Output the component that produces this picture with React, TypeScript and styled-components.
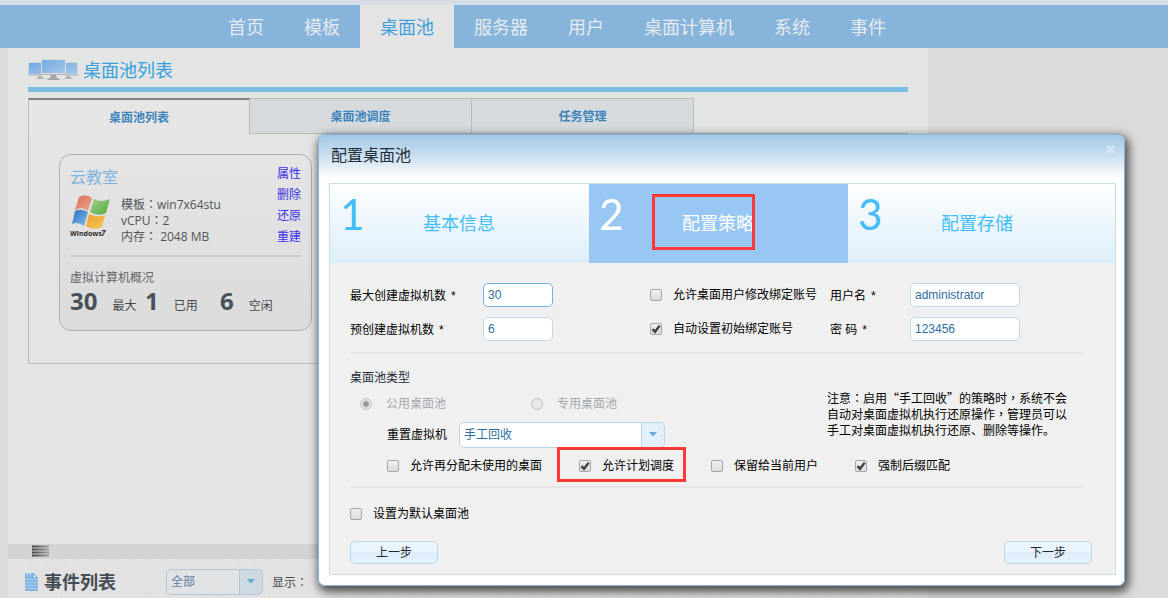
import React from "react";
import styled, { createGlobalStyle, css } from "styled-components";

const sans = `"Open Sans", "Noto Sans CJK SC", sans-serif`;
const formSans = `"Liberation Sans", "Noto Sans CJK SC", sans-serif`;

const GlobalStyle = createGlobalStyle`
  *, *::before, *::after { box-sizing: border-box; }
  html, body, #root { height: 100%; }
  body {
    margin: 0;
    overflow: hidden;
    background: #dbdbdb;
    font: 12px/16px ${sans};
    color: #44484c;
  }
  h1, h2, h3, p, ul { margin: 0; padding: 0; font-weight: 400; }
  input, select, button { font: 12px/16px ${formSans}; margin: 0; }
`;

const Page = styled.div`
  position: relative;
  display: flex;
  flex-direction: column;
  height: 100vh;
  overflow: hidden;
`;

const Nav = styled.nav`
  display: flex;
  flex: none;
  height: 48px;
  padding-left: 208px;
  border-top: 5px solid #d6dde4;
  background: #86b4da;
`;

const NavLink = styled.a<{ $active?: boolean }>`
  display: flex;
  align-items: center;
  padding: 0 20px;
  font-size: 18px;
  line-height: 24px;
  white-space: nowrap;
  text-decoration: none;
  color: ${(p) => (p.$active ? "#3f9fd8" : "#e6eaee")};
  background: ${(p) => (p.$active ? "#e4e4e4" : "transparent")};
`;

const Main = styled.main`
  display: flex;
  flex-direction: column;
  flex: 1;
  width: calc(100% - 248px);
  margin-left: 8px;
  background: #e3e4e4;
`;

const Pool = styled.section`
  flex: 1;
  padding: 8px 20px 0;
`;

const PageTitle = styled.h1`
  display: flex;
  align-items: center;
  gap: 4px;
  height: 36px;
  padding-bottom: 3px;
  border-bottom: 5px solid #7bbce0;
  font-size: 18px;
  line-height: 24px;
  color: #35a0dc;
`;

const Tabs = styled.div`
  display: flex;
  height: 36px;
  margin-top: 6px;
  border-bottom: 1px solid #babdbf;
`;

const Tab = styled.button<{ $active?: boolean }>`
  width: 222px;
  padding: 2px 0 0;
  border: 1px solid #babdbf;
  border-width: 1px 1px 0 0;
  font: bold 12px/16px ${sans};
  color: #3a83bb;
  background: #d6dadd;
  ${(p) =>
    p.$active &&
    css`
      height: 36px;
      border-left-width: 1px;
      border-top: 2px solid #808080;
      background: #e5e5e5;
    `}
`;

const TabPanel = styled.div`
  height: 230px;
  padding: 20px 30px;
  border: 1px solid #babdbf;
  border-top: 0;
`;

const Card = styled.article`
  width: 253px;
  height: 177px;
  padding: 9px 10px 0 10px;
  border: 1px solid #b0b0b0;
  border-radius: 12px;
  background: linear-gradient(#e5e5e5, #dbdbdb);
`;

const CardTop = styled.div`
  display: flex;
  justify-content: space-between;
  height: 93px;
  border-bottom: 2px solid #cbd0d3;
`;

const CardName = styled.h2`
  margin: 2px 0 6px;
  font-size: 16px;
  line-height: 22px;
  color: #7fb3dc;
`;

const Specs = styled.div`
  display: flex;
  gap: 9px;
  color: #505458;
`;

const SpecText = styled.p`
  padding-top: 3px;
  white-space: pre-line;
`;

const Actions = styled.div`
  display: flex;
  flex-direction: column;
  gap: 5px;
  padding-top: 2px;
`;

const ActionLink = styled.a`
  color: #3a30e8;
  text-decoration: none;
`;

const Caption = styled.h3`
  margin-top: 12px;
  font-size: 12px;
  line-height: 18px;
  color: #606468;
`;

const Counts = styled.div`
  display: flex;
  align-items: baseline;
`;

const Count = styled.p`
  display: flex;
  align-items: baseline;
  gap: 15px;
  width: 75px;
  white-space: nowrap;
`;

const Big = styled.strong`
  font-size: 24px;
  line-height: 28px;
  color: #465058;
`;

const Splitter = styled.div`
  flex: none;
  height: 15px;
  padding: 1px 24px;
  background: #d3d3d3;
`;

const EventBar = styled.section`
  display: flex;
  flex: none;
  align-items: center;
  height: 39px;
  padding: 7px 16px 0;
  background: repeating-linear-gradient(45deg, #e4e4e4 0 2px, #dedede 2px 3px);
`;

const EventTitle = styled.h2`
  margin: 0 50px 0 4px;
  font-size: 18px;
  line-height: 24px;
  font-weight: 700;
  color: #444c55;
`;

const SelectWrap = styled.span<{ $muted?: boolean }>`
  position: relative;
  display: flex;
  width: ${(p) => (p.$muted ? 97 : 206)}px;
  height: 26px;
  border: 1px solid ${(p) => (p.$muted ? "#b4c8dc" : "#b9d6ec")};
  border-radius: 5px;
  background: ${(p) =>
    p.$muted
      ? "linear-gradient(90deg, #e1e2e3 calc(100% - 23px), #b4c8dc 0, #b4c8dc calc(100% - 22px), #cfd9e3 0)"
      : "linear-gradient(90deg, #fff calc(100% - 23px), #b9d6ec 0, #b9d6ec calc(100% - 22px), #e2f0fb 0)"};
  select {
    flex: 1;
    padding: 0 4px;
    border: 0;
    outline: 0;
    appearance: none;
    background: transparent;
    color: ${(p) => (p.$muted ? "#5f7f9f" : "#2e6e9e")};
  }
  svg {
    position: absolute;
    right: 7px;
    top: 9px;
    pointer-events: none;
  }
`;

const ShowLabel = styled.span`
  margin-left: 9px;
  padding-top: 2px;
`;

/* Colons and commas sit in the middle of their square. */
const CenteredMark = styled.span`
  font-family: "Noto Sans CJK TC", sans-serif;
  line-height: 1px;
`;

const Dialog = styled.section`
  position: absolute;
  top: 134px;
  left: 318px;
  right: 43px;
  padding: 0 8px 10px 10px;
  border: 1px solid #86b3d9;
  border-radius: 7px;
  background: linear-gradient(#a3c8e5, #c0d9ee 16px, #fff 44px);
  box-shadow: 2px 4px 10px 2px rgba(0, 0, 0, 0.65);
  font-family: ${formSans};
  color: #000;
`;

const DialogHead = styled.header`
  display: flex;
  justify-content: space-between;
  height: 48px;
  padding: 10px 0 0 2px;
`;

const DialogTitle = styled.h2`
  font-size: 16px;
  line-height: 22px;
  color: #222e3a;
`;

const Close = styled.button`
  display: flex;
  width: 10px;
  height: 10px;
  padding: 0;
  border: 0;
  background: none;
`;

const DialogBody = styled.form`
  border: 1px solid #c8dfe9;
  background: #f0f0f0;
`;

const Steps = styled.div`
  display: flex;
  height: 79px;
`;

const StepNumber = styled.span`
  width: 24px;
  font: 42px/60px Lato, sans-serif;
`;

const StepLabel = styled.span`
  flex: 1;
  padding-right: 35px;
  font-size: 18px;
  line-height: 80px;
  text-align: center;
`;

const Step = styled.div<{ $active?: boolean }>`
  display: flex;
  flex: 0 0 33%;
  padding-left: 10px;
  color: ${(p) => (p.$active ? "#fff" : "#43bdf5")};
  background: ${(p) => (p.$active ? "#98c7f4" : "linear-gradient(#fdfeff, #eef6fc 50%, #dceef8)")};
  &:last-child {
    flex: 1;
    padding-right: 8px;
  }
`;

const Marked = styled.span<{ $inset: string }>`
  position: relative;
  display: inline-flex;
  line-height: 24px;
  &::after {
    content: "";
    position: absolute;
    inset: ${(p) => p.$inset};
    border: 3px solid #ff3838;
    pointer-events: none;
  }
`;

const Fields = styled.div`
  display: grid;
  grid-template-columns: 133px 167px 180px 80px 110px;
  row-gap: 10px;
  align-items: center;
  margin: 0 32px 0 20px;
  padding: 20px 0 11px;
  border-bottom: 2px solid #e6e6e6;
`;

const FieldLabel = styled.label`
  padding-top: 2px;
`;

const Required = styled.span`
  margin-left: 5px;
`;

const TextInput = styled.input<{ $focus?: boolean; $short?: boolean }>`
  width: ${(p) => (p.$short ? 70 : 110)}px;
  height: 24px;
  padding: 0 4px;
  border: 1px solid ${(p) => (p.$focus ? "#72b0e6" : "#bfd8ec")};
  border-radius: 5px;
  outline: 0;
  background: #fff;
  color: #2e6e9e;
`;

const Choice = styled.label<{ $off?: boolean; $gap?: number }>`
  display: flex;
  align-items: center;
  gap: ${(p) => p.$gap ?? 11}px;
  white-space: nowrap;
  color: ${(p) => (p.$off ? "#a3a8ad" : "inherit")};
`;

const Tick = styled.input`
  appearance: none;
  flex: none;
  width: 12px;
  height: 12px;
  border: 1px solid #a6a6a6;
  border-radius: 2px;
  background: linear-gradient(#eee, #dcdcdc);
  &:checked {
    background: url("data:image/svg+xml,%3Csvg xmlns='http://www.w3.org/2000/svg' viewBox='0 0 10 10'%3E%3Cpath d='M1.5 5.2 4 7.8 8.7 1.6' fill='none' stroke='%23404040' stroke-width='2.4'/%3E%3C/svg%3E") center / 10px 10px,
      linear-gradient(#eee, #dcdcdc);
  }
`;

const Radio = styled.input`
  appearance: none;
  flex: none;
  width: 12px;
  height: 12px;
  border: 1px solid #c4c4c4;
  border-radius: 50%;
  background: #e8e8e8;
  &:checked { background: radial-gradient(circle, #969696 2px, #e8e8e8 4px); }
`;

const TypeSection = styled.div`
  display: flex;
  flex-direction: column;
  margin: 0 32px 0 20px;
  padding: 16px 0 8px;
  border-bottom: 2px solid #e6e6e6;
`;

const TypeTop = styled.div`
  display: flex;
  justify-content: space-between;
`;

const TypeTitle = styled.h3`
  font-size: 12px;
  line-height: 16px;
  color: #1e2a36;
`;

const RadioRow = styled.div`
  display: grid;
  grid-template-columns: 171px auto;
  margin: 10px 0 10px 10px;
`;

const ResetRow = styled.label`
  display: flex;
  align-items: center;
  gap: 12px;
  padding-left: 37px;
`;

const Note = styled.p`
  width: 256px;
  padding-top: 20px;
  font-family: "Noto Sans CJK SC", sans-serif;
  white-space: pre-line;
`;

const Options = styled.div`
  display: grid;
  grid-template-columns: 192px 132px 144px auto;
  margin: 6px 0 0 37px;
`;

const DefaultRow = styled.div`
  padding: 18px 20px 0;
`;

const Footer = styled.footer`
  display: flex;
  justify-content: space-between;
  padding: 19px 23px 10px 20px;
`;

const PushButton = styled.button`
  width: 88px;
  height: 23px;
  padding: 0;
  border: 1px solid #b9d7ee;
  border-radius: 5px;
  background: linear-gradient(#e9f4fd 50%, #dcecf9 50%, #e6f3fc);
  color: #1c2a38;
`;

const Arrow = () => (
  <svg width="8" height="5" viewBox="0 0 8 5" aria-hidden="true">
    <path d="M0 0H8L4 4.5Z" fill="#68a8d4" />
  </svg>
);

const MonitorsIcon = () => (
  <svg width="51" height="22" viewBox="0 0 51 22" aria-hidden="true">
    <defs>
      <linearGradient id="screen" x1="0" y1="0" x2="1" y2="1">
        <stop offset="0" stopColor="#74aae0" />
        <stop offset="0.5" stopColor="#8cb8e4" />
        <stop offset="1" stopColor="#a4c6e8" />
      </linearGradient>
    </defs>
    <path d="M0 3H14V17H0ZM37 3H50V17H37Z" fill="#d4d6d8" />
    <path d="M1 4H14V15H1ZM37 4H49V15H37Z" fill="url(#screen)" />
    <path d="M0 16H14M37 16H50" stroke="#b8babc" />
    <path d="M10 17h4l1 2 3 1H7l3-1ZM38 17h4l1 2 3 1H35l3-1Z" fill="#b0b2b4" />
    <path d="M13 0H38V16H13Z" fill="#dcdede" />
    <path d="M14 1H37V14H14Z" fill="url(#screen)" />
    <path d="M13 15.5H38" stroke="#b0b2b4" />
    <path d="M23 16h5l1 3 3 1v1H19v-1l3-1Z" fill="#a4a6a8" />
  </svg>
);

const WindowsIcon = () => (
  <svg width="42" height="44" viewBox="0 0 42 44" role="img" aria-label="Windows 7">
    <defs>
      <linearGradient id="red" x1="0" y1="0" x2="1" y2="1">
        <stop offset="0" stopColor="#d8705a" />
        <stop offset="1" stopColor="#f0a488" />
      </linearGradient>
      <linearGradient id="green" x1="0" y1="0" x2="1" y2="1">
        <stop offset="0" stopColor="#a4d488" />
        <stop offset="1" stopColor="#4ca83c" />
      </linearGradient>
      <linearGradient id="blue" x1="0" y1="0" x2="1" y2="1">
        <stop offset="0" stopColor="#2e70bc" />
        <stop offset="1" stopColor="#80bce8" />
      </linearGradient>
      <linearGradient id="yellow" x1="0" y1="0" x2="1" y2="1">
        <stop offset="0" stopColor="#f0a030" />
        <stop offset="1" stopColor="#f0c858" />
      </linearGradient>
    </defs>
    <path d="M9 3Q16-1 22 4L18 17Q12 12 5 16Z" fill="url(#red)" />
    <path d="M24 5Q31 9 40 5L36 19Q28 23 20 18Z" fill="url(#green)" />
    <path d="M5 17Q11 14 18 18L14 32Q8 27 2 30Z" fill="url(#blue)" />
    <path d="M19 20Q27 24 35 21L32 33Q23 37 16 32Z" fill="url(#yellow)" />
    <text x="0" y="42" fontFamily="Open Sans" fontSize="7" fontWeight="700" fill="#2c2c2c">Windows</text>
    <text x="31" y="42" fontFamily="Open Sans" fontSize="8" fontStyle="italic" fontWeight="700" fill="#2c2c2c">7</text>
  </svg>
);

const FileIcon = () => (
  <svg width="16" height="20" viewBox="0 0 16 20" aria-hidden="true">
    <path d="M1 1H9L14 6V19H1Z" fill="#86b6e2" />
    <path d="M9 1V6H14Z" fill="#e6eef6" stroke="#6aa0d0" />
    <path d="M1 7.5H14M1 10.5H14M1 13.5H14M1 16.5H14" stroke="#a8cbea" />
    <path d="M3.5 1V3M6.5 1V3" stroke="#d8e6f4" />
  </svg>
);

const GripIcon = () => (
  <svg width="18" height="12" viewBox="0 0 18 12" aria-hidden="true">
    <defs>
      <linearGradient id="grip" gradientUnits="userSpaceOnUse" x1="0" y1="0" x2="18" y2="0">
        <stop offset="0" stopColor="#404040" />
        <stop offset="1" stopColor="#aaa" />
      </linearGradient>
    </defs>
    <path d="M0 1.5H17M0 4.5H17M0 7.5H17M0 10.5H17" stroke="url(#grip)" strokeWidth="2" />
  </svg>
);

const Zh = ({ text }: { text: string }) => (
  <>
    {text.split(/([：，])/).map((part, i) =>
      i % 2 ? <CenteredMark key={i} lang="zh-TW">{part}</CenteredMark> : part
    )}
  </>
);

const navItems = ["首页", "模板", "桌面池", "服务器", "用户", "桌面计算机", "系统", "事件"];
const cardActions = ["属性", "删除", "还原", "重建"];

export default function App() {
  return (
    <>
      <GlobalStyle />
      <Page>
        <Nav>
          {navItems.map((item) => (
            <NavLink key={item} href="#" $active={item === "桌面池"}>{item}</NavLink>
          ))}
        </Nav>
        <Main>
          <Pool>
            <PageTitle><MonitorsIcon />桌面池列表</PageTitle>
            <Tabs>
              <Tab $active>桌面池列表</Tab>
              <Tab>桌面池调度</Tab>
              <Tab>任务管理</Tab>
            </Tabs>
            <TabPanel>
              <Card>
                <CardTop>
                  <div>
                    <CardName>云教室</CardName>
                    <Specs>
                      <WindowsIcon />
                      <SpecText><Zh text={"模板：win7x64stu\nvCPU：2\n内存： 2048 MB"} /></SpecText>
                    </Specs>
                  </div>
                  <Actions>
                    {cardActions.map((action) => (
                      <ActionLink key={action} href="#">{action}</ActionLink>
                    ))}
                  </Actions>
                </CardTop>
                <Caption>虚拟计算机概况</Caption>
                <Counts>
                  <Count><Big>30</Big>最大</Count>
                  <Count><Big>1</Big>已用</Count>
                  <Count><Big>6</Big>空闲</Count>
                </Counts>
              </Card>
            </TabPanel>
          </Pool>
          <Splitter><GripIcon /></Splitter>
          <EventBar>
            <FileIcon />
            <EventTitle>事件列表</EventTitle>
            <SelectWrap $muted>
              <select aria-label="事件类型"><option>全部</option></select>
              <Arrow />
            </SelectWrap>
            <ShowLabel><Zh text="显示：" /></ShowLabel>
          </EventBar>
        </Main>

        <Dialog role="dialog" aria-labelledby="dialog-title">
          <DialogHead>
            <DialogTitle id="dialog-title">配置桌面池</DialogTitle>
            <Close aria-label="关闭">
              <svg width="9" height="9" viewBox="0 0 9 9" aria-hidden="true">
                <path d="M1 1 8 8M8 1 1 8" stroke="#d6e5f5" strokeWidth="3" />
              </svg>
            </Close>
          </DialogHead>
          <DialogBody onSubmit={(e) => e.preventDefault()}>
            <Steps>
              <Step><StepNumber>1</StepNumber><StepLabel>基本信息</StepLabel></Step>
              <Step $active>
                <StepNumber>2</StepNumber>
                <StepLabel><Marked $inset="-18px -1px -14px -30px">配置策略</Marked></StepLabel>
              </Step>
              <Step><StepNumber>3</StepNumber><StepLabel>配置存储</StepLabel></Step>
            </Steps>
            <Fields>
              <FieldLabel htmlFor="max">最大创建虚拟机数<Required>*</Required></FieldLabel>
              <TextInput id="max" defaultValue="30" $short $focus />
              <Choice><Tick type="checkbox" />允许桌面用户修改绑定账号</Choice>
              <FieldLabel htmlFor="user">用户名<Required>*</Required></FieldLabel>
              <TextInput id="user" defaultValue="administrator" />
              <FieldLabel htmlFor="pre">预创建虚拟机数<Required>*</Required></FieldLabel>
              <TextInput id="pre" defaultValue="6" $short />
              <Choice><Tick type="checkbox" defaultChecked />自动设置初始绑定账号</Choice>
              <FieldLabel htmlFor="pass">密 码<Required>*</Required></FieldLabel>
              <TextInput id="pass" defaultValue="123456" />
            </Fields>
            <TypeSection>
              <TypeTop>
                <div>
                  <TypeTitle>桌面池类型</TypeTitle>
                  <RadioRow>
                    <Choice $off $gap={14}><Radio type="radio" name="type" defaultChecked disabled />公用桌面池</Choice>
                    <Choice $off $gap={14}><Radio type="radio" name="type" disabled />专用桌面池</Choice>
                  </RadioRow>
                  <ResetRow>
                    重置虚拟机
                    <SelectWrap>
                      <select><option>手工回收</option></select>
                      <Arrow />
                    </SelectWrap>
                  </ResetRow>
                </div>
                <Note>
                  <Zh text={"注意：启用“手工回收”的策略时，系统不会\n自动对桌面虚拟机执行还原操作，管理员可以\n手工对桌面虚拟机执行还原、删除等操作。"} />
                </Note>
              </TypeTop>
              <Options>
                <Choice><Tick type="checkbox" />允许再分配未使用的桌面</Choice>
                <div>
                  <Marked $inset="-7px -12px -4px -22px">
                    <Choice><Tick type="checkbox" defaultChecked />允许计划调度</Choice>
                  </Marked>
                </div>
                <Choice><Tick type="checkbox" />保留给当前用户</Choice>
                <Choice><Tick type="checkbox" defaultChecked />强制后缀匹配</Choice>
              </Options>
            </TypeSection>
            <DefaultRow>
              <Choice><Tick type="checkbox" />设置为默认桌面池</Choice>
            </DefaultRow>
            <Footer>
              <PushButton type="button">上一步</PushButton>
              <PushButton type="submit">下一步</PushButton>
            </Footer>
          </DialogBody>
        </Dialog>
      </Page>
    </>
  );
}
